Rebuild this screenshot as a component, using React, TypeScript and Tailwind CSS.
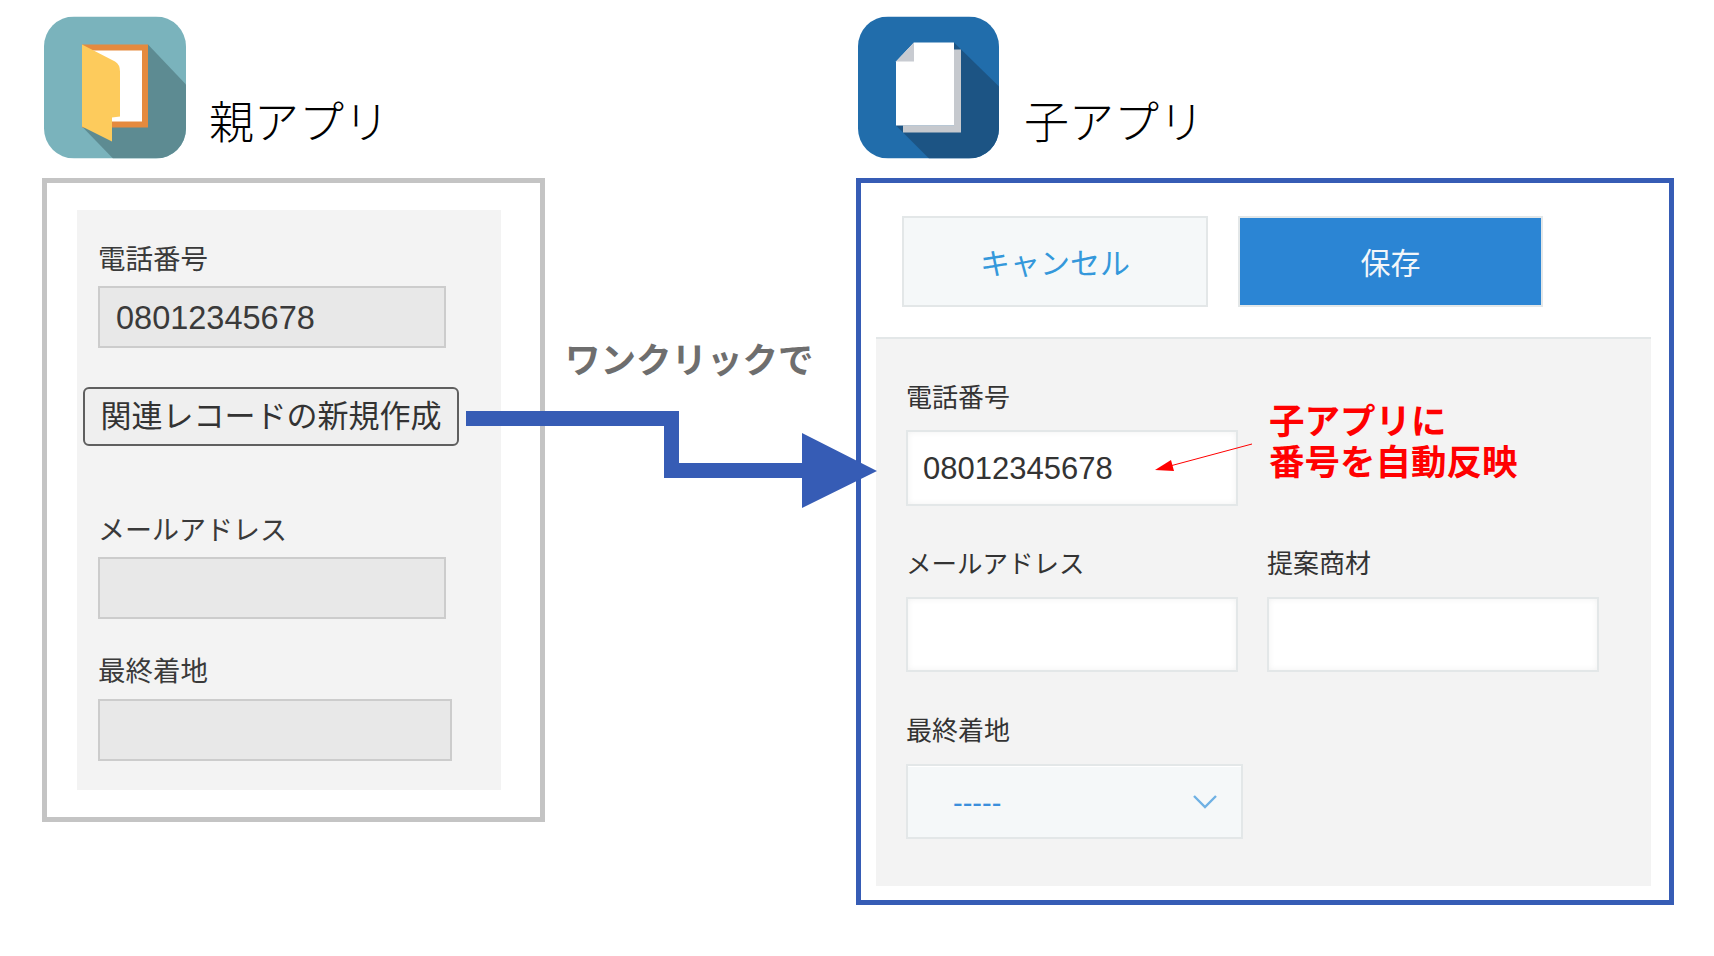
const sans = "font-['Liberation_Sans','Noto_Sans_CJK_JP',sans-serif]";

function ParentIcon() {
  return (
    <svg viewBox="0 0 142 142" className="block h-[143px] w-[142px]">
      <defs>
        <clipPath id="parent-clip">
          <rect width="142" height="142" rx="30" />
        </clipPath>
      </defs>
      <g clipPath="url(#parent-clip)">
        <rect width="142" height="142" fill="#7ab3bc" />
        <path d="M104 28L142 68V142H69L38 110Z" fill="#5d8b92" />
      </g>
      <rect x="38" y="28" width="66" height="83" fill="#e58a3e" />
      <rect x="44" y="34" width="54" height="71" fill="#ffffff" />
      <path d="M38 28L71 45Q76 48 76 55V100L68 101V125L38 110Z" fill="#fdcb5c" />
    </svg>
  );
}

function ChildIcon() {
  return (
    <svg viewBox="0 0 141 142" className="block h-[143px] w-[141px]">
      <defs>
        <clipPath id="child-clip">
          <rect width="141" height="142" rx="30" />
        </clipPath>
      </defs>
      <g clipPath="url(#child-clip)">
        <rect width="141" height="142" fill="#216dab" />
        <path d="M96 26L141 70V142H71L38 109Z" fill="#1c5484" />
      </g>
      <path d="M96 33H103V116H45V109H96Z" fill="#c6c9ce" />
      <path d="M38 45L56 26H96V109H38Z" fill="#ffffff" />
      <path d="M38 45H56V26Z" fill="#c8cbd1" />
    </svg>
  );
}

function ParentField({ label, value, width, labelSize, labelTop, gap }: { label: string; value?: string; width: string; labelSize: string; labelTop: string; gap: string }) {
  return (
    <div className={labelTop}>
      <div className={`${labelSize} h-[34px] leading-[38px] text-[#3a3a3a]`}>{label}</div>
      <div className={`${gap} ${width} flex h-[62px] items-center border-2 border-[#cccccc] bg-[#e8e8e8] pl-[16px] pt-[3px] text-[32.5px] text-[#3a3a3a]`}>
        {value}
      </div>
    </div>
  );
}

function ChildField({ label, value, height, labelSize, gap }: { label: string; value?: string; height: string; labelSize: string; gap: string }) {
  return (
    <div className="w-[332px]">
      <div className={`${labelSize} h-[34px] leading-[38px] text-[#333333]`}>{label}</div>
      <div className={`${gap} ${height} flex items-center border-2 border-[#e3e7e8] bg-white pl-[15px] pt-[3px] text-[31px] text-[#333333] shadow-[inset_0_0_6px_rgba(0,0,0,0.06)]`}>
        {value}
      </div>
    </div>
  );
}

export default function App() {
  return (
    <div className={`${sans} relative flex h-[956px] w-[1714px] items-start gap-[311px] overflow-hidden bg-white pl-[42px] pt-[16px]`}>
      {/* Parent app */}
      <div className="w-[503px]">
        <div className="flex h-[143px] items-end pl-[2px]">
          <ParentIcon />
          <div className="mb-[5px] ml-[23px] text-[45px] font-light leading-[60px] text-black">親アプリ</div>
        </div>
        <div className="mt-[19px] h-[644px] border-[5px] border-[#c4c4c4] pb-[27px] pl-[30px] pr-[39px] pt-[27px]">
          <div className="h-full bg-[#f3f3f3] pl-[21px] pt-[31px]">
            <ParentField label="電話番号" value="08012345678" width="w-[348px]" labelSize="text-[27.5px]" labelTop="" gap="mt-[11px]" />
            <div className="-ml-[15px] mt-[39px] flex h-[59px] w-[376px] items-center justify-center rounded-[6px] border-2 border-[#5f5f5f] bg-[#efefef] pt-[2px] text-[31px] text-[#333333]">
              関連レコードの新規作成
            </div>
            <ParentField label="メールアドレス" width="w-[348px]" labelSize="text-[27px]" labelTop="mt-[66px]" gap="mt-[11px]" />
            <ParentField label="最終着地" width="w-[354px]" labelSize="text-[27.5px]" labelTop="mt-[34px]" gap="mt-[12px]" />
          </div>
        </div>
      </div>

      {/* Child app */}
      <div className="w-[818px]">
        <div className="flex h-[143px] items-end pl-[2px]">
          <ChildIcon />
          <div className="mb-[5px] ml-[25px] text-[45px] font-light leading-[60px] text-black">子アプリ</div>
        </div>
        <div className="relative mt-[19px] h-[727px] border-[5px] border-[#365cb5] pt-[33px]">
          <div className="flex gap-[30px] pl-[41px]">
            <div className="flex h-[91px] w-[306px] items-center justify-center border-2 border-[#e3e7e8] bg-[#f5f8f9] pt-[4px] text-[30px] text-[#3498db]">
              キャンセル
            </div>
            <div className="flex h-[91px] w-[305px] items-center justify-center border-2 border-[#e3e7e8] bg-[#2b85d4] pt-[4px] text-[30px] text-[#f2f6fa]">
              保存
            </div>
          </div>
          <div className="ml-[15px] mt-[30px] h-[549px] w-[775px] border-t-2 border-[#e3e7e8] bg-[#f3f3f3] pl-[30px] pt-[40px]">
            <ChildField label="電話番号" value="08012345678" height="h-[76px]" labelSize="text-[26px]" gap="mt-[17px]" />
            <div className="mt-[39px] flex gap-[29px]">
              <ChildField label="メールアドレス" height="h-[75px]" labelSize="text-[25.5px]" gap="mt-[18px]" />
              <ChildField label="提案商材" height="h-[75px]" labelSize="text-[26px]" gap="mt-[18px]" />
            </div>
            <div className="mt-[40px] h-[34px] text-[26px] leading-[38px] text-[#333333]">最終着地</div>
            <div className="mt-[18px] flex h-[75px] w-[337px] items-center justify-between border-2 border-[#e3e7e8] bg-[#f5f8f9] pl-[45px] pr-[24px] shadow-[inset_0_1px_0_#ffffff]">
              <div className="mt-[4px] text-[29px] leading-none text-[#3b8fdc]">-----</div>
              <svg viewBox="0 0 24 14" className="block h-[14px] w-[24px]">
                <path d="M1 1L12 12L23 1" fill="none" stroke="#6fb1e4" strokeWidth="2.4" />
              </svg>
            </div>
          </div>
          <div className="absolute left-[408px] top-[219px] text-[35.5px] font-bold leading-[41px] text-[#ff0000]">
            子アプリに
            <br />
            番号を自動反映
          </div>
        </div>
      </div>

      {/* Connecting arrows */}
      <div className="absolute left-[565px] top-[337px] text-[35.5px] font-bold leading-[48px] text-[#6e6e6e]">ワンクリックで</div>
      <svg viewBox="0 0 1714 956" className="pointer-events-none absolute left-0 top-0 h-[956px] w-[1714px]">
        <path d="M466 411H679V463H802V433L877 471L802 508V478H664V426H466Z" fill="#365cb5" />
        <path d="M1252 444L1170 466" stroke="#ff0000" strokeWidth="1" fill="none" />
        <path d="M1155 470L1171 460L1174 471Z" fill="#ff0000" />
      </svg>
    </div>
  );
}
